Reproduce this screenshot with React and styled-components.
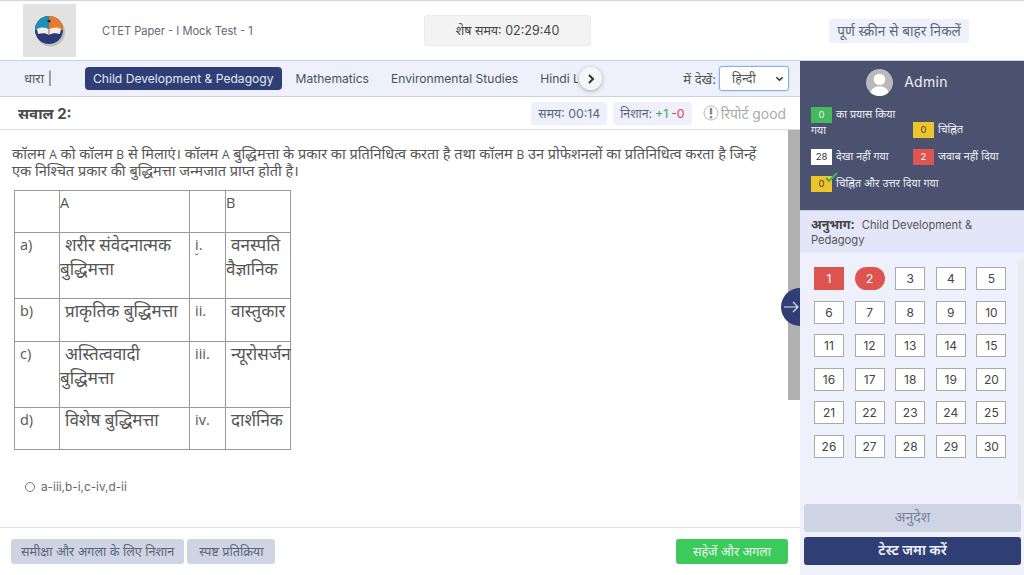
import React from "react";
import styled, { createGlobalStyle } from "styled-components";

const UI_FONT = `"Inter", "Noto Sans", "Open Sans", sans-serif`;
const BODY_FONT = `"Open Sans", "Noto Sans", sans-serif`;

const Global = createGlobalStyle`
  html, body { margin: 0; padding: 0; height: 100%; background: #fff; }
  * { box-sizing: border-box; }
  body { font-family: ${UI_FONT}; color: #444; overflow: hidden; }
`;

const Page = styled.div`
  width: 1024px;
  height: 575px;
  display: flex;
  flex-direction: column;
  overflow: hidden;
`;

const Header = styled.header`
  height: 61px;
  flex: none;
  display: flex;
  align-items: center;
  border-top: 1px solid #ccd5e8;
  border-bottom: 1px solid #c8d1e6;
  padding-left: 23px;
`;

const LogoBox = styled.div`
  width: 53px;
  height: 53px;
  background: #e2e2e2;
  display: flex;
  align-items: center;
  justify-content: center;
  flex: none;
`;

const TestName = styled.div`
  width: 322px;
  margin-left: 26px;
  font-size: 11.1px;
  color: #667;
`;

const Timer = styled.div`
  width: 167px;
  height: 31px;
  background: #f3f3f3;
  border: 1px solid #ebebeb;
  border-radius: 3px;
  display: flex;
  align-items: center;
  justify-content: center;
  font-size: 12.5px;
  color: #444;
`;

const ExitButton = styled.div`
  margin-left: 238px;
  width: 140px;
  height: 24px;
  background: #eef1fb;
  border-radius: 3px;
  display: flex;
  align-items: center;
  justify-content: center;
  font-size: 13.6px;
  color: #5c6478;
`;

const Body = styled.div`
  flex: 1;
  display: flex;
  min-height: 0;
`;

const Main = styled.main`
  width: 800px;
  flex: none;
  display: flex;
  flex-direction: column;
  position: relative;
`;

const TabsBar = styled.div`
  height: 36px;
  flex: none;
  background: #eef1fb;
  border-bottom: 1px solid #c8d1e6;
  display: flex;
  align-items: center;
  position: relative;
`;

const SectionLabel = styled.div`
  width: 85px;
  padding: 0 0 2px 24px;
  font-size: 13px;
  color: #555;
  flex: none;
`;

const Tabs = styled.div`
  width: 493px;
  display: flex;
  align-items: center;
  overflow: hidden;
  flex: none;
`;

const Tab = styled.div`
  flex: none;
  height: 23px;
  padding: 0 8px;
  margin-right: 6px;
  border-radius: 4px;
  display: flex;
  align-items: center;
  font-size: 12.1px;
  white-space: nowrap;
  color: ${(p) => (p.$active ? "#e6e9f5" : "#4a4f5c")};
  background: ${(p) => (p.$active ? "#2f3e75" : "transparent")};
`;

const ScrollButton = styled.div`
  position: absolute;
  left: 579px;
  top: 6px;
  width: 23px;
  height: 23px;
  border-radius: 50%;
  background: #f5f6fa;
  box-shadow: 0 1px 4px rgba(0, 0, 0, 0.3);
  display: flex;
  align-items: center;
  justify-content: center;
`;

const ViewIn = styled.div`
  margin-left: auto;
  display: flex;
  align-items: center;
  gap: 3px;
  padding-right: 11px;
  font-size: 13px;
  color: #555;
`;

const LangSelect = styled.div`
  width: 70px;
  height: 25px;
  background: #fff;
  border: 1px solid #7db4ea;
  border-radius: 3px;
  box-shadow: 0 0 2px #a9cdf2;
  display: flex;
  align-items: center;
  justify-content: space-between;
  padding: 0 4px 0 12px;
  font-size: 12.5px;
  color: #555;
`;

const QuestionBar = styled.div`
  height: 33px;
  flex: none;
  display: flex;
  align-items: center;
  border-bottom: 1px solid #d5dbe9;
  padding: 0 14px 0 18px;
`;

const QuestionNo = styled.div`
  font-size: 15px;
  font-weight: 700;
  color: #4a4a4a;
  margin-right: auto;
`;

const Chip = styled.div`
  height: 23px;
  padding: 0 7px;
  margin-right: 6px;
  background: #eef1fb;
  border-radius: 3px;
  display: flex;
  align-items: center;
  gap: 3px;
  font-size: 12.3px;
  color: #5c6478;
`;

const Mark = styled.span`
  color: ${(p) => p.$color};
`;

const Report = styled.div`
  display: flex;
  align-items: center;
  gap: 2px;
  margin-left: 5px;
  font-size: 13.9px;
  color: #aaa;
`;

const Content = styled.div`
  flex: 1;
  min-height: 0;
  padding: 16px 24px 0 12px;
  position: relative;
`;

const Thumb = styled.div`
  position: absolute;
  right: 0;
  top: 0;
  width: 12px;
  height: 270px;
  background: #b0b0b0;
`;

const QuestionText = styled.p`
  margin: 0;
  font-family: ${BODY_FONT};
  font-size: 14.5px;
  line-height: 16px;
  color: #555;
`;

const Latin = styled.span`
  font-size: 12px;
`;

const MatchTable = styled.table`
  margin: 11px 0 0 2px;
  border-collapse: collapse;
  table-layout: fixed;
  width: 276px;
  font-family: ${BODY_FONT};
  font-size: 14.5px;
  line-height: 24px;
  color: #555;
`;

const Cell = styled.td`
  border: 1px solid #999;
  vertical-align: top;
  padding: 0 0 0 ${(p) => p.$pad ?? 5}px;
  height: ${(p) => p.$h}px;
  width: ${(p) => p.$w}px;
`;

const Hindi = styled.div`
  font-size: 17px;
  white-space: nowrap;
  padding-left: ${(p) => (p.$indent ? 5 : 0)}px;
`;

const Squiggle = styled.span`
  text-decoration: underline wavy #d33 1px;
`;

const Option = styled.label`
  margin: 30px 0 0 13px;
  display: flex;
  align-items: center;
  gap: 6px;
  font-size: 11.8px;
  color: #666;
`;

const Radio = styled.span`
  width: 10px;
  height: 10px;
  border-radius: 50%;
  border: 1px solid #777;
  background: #fff;
`;

const Footer = styled.div`
  height: 48px;
  flex: none;
  border-top: 1px solid #dcdfea;
  display: flex;
  align-items: flex-start;
  padding: 11px 12px 0 11px;
  gap: 3px;
`;

const ActionButton = styled.div`
  height: 25px;
  padding: 0 ${(p) => p.$pad}px;
  border-radius: 3px;
  background: ${(p) => p.$bg};
  color: ${(p) => p.$color};
  display: flex;
  align-items: center;
  font-size: 12.6px;
  ${(p) => p.$right && "margin-left: auto; width: 112px; justify-content: center;"}
`;

const Side = styled.aside`
  flex: 1;
  display: flex;
  flex-direction: column;
  background: #eef1fb;
  min-width: 0;
`;

const Summary = styled.div`
  height: 150px;
  flex: none;
  background: #4a5270;
  border-bottom: 1px solid #c8cee0;
  padding: 8px 0 0 11px;
  color: #eef0f6;
`;

const User = styled.div`
  display: flex;
  align-items: center;
  justify-content: center;
  gap: 11px;
  margin: 0 0 11px -1px;
  padding-right: 20px;
`;

const UserName = styled.span`
  font-size: 14px;
  letter-spacing: 0.3px;
  padding-bottom: 3px;
`;

const Avatar = styled.div`
  width: 27px;
  height: 27px;
  border-radius: 50%;
  background: #b9b9b9;
  overflow: hidden;
`;

const Legend = styled.div`
  display: flex;
  flex-wrap: wrap;
  align-items: flex-end;
`;

const LegendItem = styled.div`
  width: ${(p) => p.$w ?? 102}px;
  padding-right: ${(p) => p.$pr ?? 0}px;
  font-size: 10.7px;
  line-height: 15px;
  margin-bottom: 11px;
  position: relative;
`;

const Badge = styled.span`
  display: inline-block;
  width: 21px;
  height: 16px;
  margin-right: 4px;
  text-align: center;
  font-size: 9.5px;
  line-height: 16px;
  vertical-align: middle;
  background: ${(p) => p.$bg};
  color: ${(p) => p.$color};
`;

const Tick = styled.svg`
  position: absolute;
  left: 14px;
  top: -4px;
`;

const SectionInfo = styled.div`
  height: 42px;
  flex: none;
  background: #e3e6f8;
  padding: 6px 11px 0;
  font-size: 11.2px;
  line-height: 15px;
  color: #555;
`;

const Bold = styled.b`
  font-size: 12.5px;
  color: #444;
  margin-right: 4px;
`;

const PaletteWrap = styled.div`
  flex: 1;
  min-height: 0;
  padding: 14px 0 0 14px;
  position: relative;
`;

const Palette = styled.div`
  display: grid;
  grid-template-columns: repeat(5, 30px);
  grid-auto-rows: 23px;
  column-gap: 10.6px;
  row-gap: 10.6px;
`;

const Cellbtn = styled.div`
  display: flex;
  align-items: center;
  justify-content: center;
  font-size: 12px;
  color: ${(p) => (p.$state ? "#fff" : "#444")};
  background: ${(p) => (p.$state ? "#dd5450" : "#fff")};
  border: ${(p) => (p.$state ? "none" : "1px solid #aaa")};
  border-radius: ${(p) => (p.$state === "round" ? "12px" : "0")};
`;

const SideTrack = styled.div`
  position: absolute;
  right: 0;
  top: 7px;
  width: 6px;
  height: 240px;
  background: #e9ebf2;
`;

const SideButtons = styled.div`
  flex: none;
  padding: 0 3px 10px 4px;
  display: flex;
  flex-direction: column;
  gap: 5px;
`;

const SideButton = styled.div`
  height: 28px;
  padding-bottom: 4px;
  border-radius: 3px;
  background: ${(p) => p.$bg};
  color: ${(p) => p.$color};
  font-size: 14px;
  font-weight: ${(p) => (p.$strong ? 600 : 400)};
  display: flex;
  align-items: center;
  justify-content: center;
`;

const CollapseTab = styled.div`
  position: absolute;
  left: 781px;
  top: 288px;
  width: 19px;
  height: 38px;
  border-radius: 19px 0 0 19px;
  background: #2f3e75;
  display: flex;
  align-items: center;
  justify-content: flex-start;
  padding-left: 2px;
`;

const rows = [
  ["a)", ["शरीर संवेदनात्मक", "बुद्धिमत्ता"], "i.", ["वनस्पति", "वैज्ञानिक"], 66],
  ["b)", ["प्राकृतिक बुद्धिमत्ता"], "ii.", ["वास्तुकार"], 43],
  ["c)", ["अस्तित्ववादी", "बुद्धिमत्ता"], "iii.", ["न्यूरोसर्जन"], 66],
  ["d)", ["विशेष बुद्धिमत्ता"], "iv.", ["दार्शनिक"], 42],
];

function Lines({ lines }) {
  return lines.map((line, i) => (
    <Hindi key={i} $indent={i === 0}>{line}</Hindi>
  ));
}

function Logo() {
  return (
    <svg width="32" height="32" viewBox="0 0 32 32">
      <circle cx="16.5" cy="17" r="14.5" fill="#8a8a8a" opacity="0.4" />
      <circle cx="15" cy="15" r="14" fill="#2a3a78" />
      <path d="M15 1a14 14 0 0 1 14 14H15z" fill="#e87b2c" />
      <path d="M15 1A14 14 0 0 0 1 15h14z" fill="#1f8fb8" />
      <circle cx="15" cy="6" r="1.6" fill="#2a2a3a" />
      <path d="M3 14c4-2 9-2 12 1 3-3 8-3 12-1l-1 5c-4-1-8-1-11 1-3-2-7-2-11-1z" fill="#f4efe4" />
      <path d="M15 15v5" stroke="#c55" strokeWidth="1" />
    </svg>
  );
}

export default function App() {
  const cells = Array.from({ length: 30 }, (_, i) => i + 1);
  return (
    <Page>
      <Global />
      <Header>
        <LogoBox>
          <Logo />
        </LogoBox>
        <TestName>CTET Paper - I Mock Test - 1</TestName>
        <Timer>शेष समय: 02:29:40</Timer>
        <ExitButton>पूर्ण स्क्रीन से बाहर निकलें</ExitButton>
      </Header>
      <Body>
        <Main>
          <TabsBar>
            <SectionLabel>धारा |</SectionLabel>
            <Tabs>
              <Tab $active>Child Development &amp; Pedagogy</Tab>
              <Tab>Mathematics</Tab>
              <Tab>Environmental Studies</Tab>
              <Tab>Hindi Language</Tab>
            </Tabs>
            <ScrollButton>
              <svg width="10" height="10" viewBox="0 0 10 10">
                <path d="M3 1l4 4-4 4" fill="none" stroke="#333" strokeWidth="2" />
              </svg>
            </ScrollButton>
            <ViewIn>
              में देखें:
              <LangSelect>
                हिन्दी
                <svg width="9" height="9" viewBox="0 0 10 10">
                  <path d="M1.5 3.5L5 7l3.5-3.5" fill="none" stroke="#333" strokeWidth="1.6" />
                </svg>
              </LangSelect>
            </ViewIn>
          </TabsBar>
          <QuestionBar>
            <QuestionNo>सवाल 2:</QuestionNo>
            <Chip>समय: 00:14</Chip>
            <Chip>
              निशान: <Mark $color="#3aa655">+1</Mark> <Mark $color="#e0444a">-0</Mark>
            </Chip>
            <Report>
              <svg width="16" height="16" viewBox="0 0 16 16">
                <circle cx="8" cy="8" r="7" fill="none" stroke="#bbb" strokeWidth="1" />
                <path d="M8 3v6.5" stroke="#888" strokeWidth="2.4" />
                <circle cx="8" cy="12.2" r="1.3" fill="#888" />
              </svg>
              रिपोर्ट good
            </Report>
          </QuestionBar>
          <Content>
            <Thumb />
            <QuestionText>
              कॉलम <Latin>A</Latin> को कॉलम <Latin>B</Latin> से मिलाएं। कॉलम <Latin>A</Latin> बुद्धिमत्ता के प्रकार का प्रतिनिधित्व करता है तथा कॉलम <Latin>B</Latin> उन प्रोफेशनलों का प्रतिनिधित्व करता है जिन्हें एक निश्चित प्रकार की बुद्धिमत्ता जन्मजात प्राप्त होती है।
            </QuestionText>
            <MatchTable>
              <tbody>
                <tr>
                  <Cell $w={45} $h={42} />
                  <Cell $w={130} $pad={0}>A</Cell>
                  <Cell $w={36} />
                  <Cell $w={65} $pad={0}>B</Cell>
                </tr>
                {rows.map(([a, left, b, right, h]) => (
                  <tr key={a}>
                    <Cell $h={h}>{a}</Cell>
                    <Cell $pad={0}><Lines lines={left} /></Cell>
                    <Cell>{b === "i." ? <><Squiggle>i</Squiggle>.</> : b}</Cell>
                    <Cell $pad={0}><Lines lines={right} /></Cell>
                  </tr>
                ))}
              </tbody>
            </MatchTable>
            <Option>
              <Radio />
              a-iii,b-i,c-iv,d-ii
            </Option>
          </Content>
          <Footer>
            <ActionButton $pad={10} $bg="#ced4e4" $color="#5c6478">समीक्षा और अगला के लिए निशान</ActionButton>
            <ActionButton $pad={12} $bg="#ced4e4" $color="#5c6478">स्पष्ट प्रतिक्रिया</ActionButton>
            <ActionButton $right $bg="#3ccb5a" $color="#eafbee">सहेजें और अगला</ActionButton>
          </Footer>
        </Main>
        <CollapseTab>
          <svg width="17" height="14" viewBox="0 0 17 14">
            <path d="M1 7h14M10 2l5 5-5 5" fill="none" stroke="#dfe5f5" strokeWidth="1.2" />
          </svg>
        </CollapseTab>
        <Side>
          <Summary>
            <User>
              <Avatar>
                <svg width="27" height="27" viewBox="0 0 26 26">
                  <circle cx="13" cy="10" r="5.5" fill="#fff" />
                  <ellipse cx="13" cy="24" rx="9" ry="7.5" fill="#fff" />
                </svg>
              </Avatar>
              <UserName>Admin</UserName>
            </User>
            <Legend>
              <LegendItem $pr={12}><Badge $bg="#46b85f" $color="#e4f6e8">0</Badge>का प्रयास किया गया</LegendItem>
              <LegendItem><Badge $bg="#eec42d" $color="#444">0</Badge>चिह्नित</LegendItem>
              <LegendItem><Badge $bg="#fff" $color="#333">28</Badge>देखा नहीं गया</LegendItem>
              <LegendItem><Badge $bg="#dd5450" $color="#fff">2</Badge>जवाब नहीं दिया</LegendItem>
              <LegendItem $w={200}>
                <Badge $bg="#eec42d" $color="#444">0</Badge>चिह्नित और उत्तर दिया गया
                <Tick width="13" height="11" viewBox="0 0 13 11">
                  <path d="M1 6l3 3 8-8" fill="none" stroke="#3fb55a" strokeWidth="2" />
                </Tick>
              </LegendItem>
            </Legend>
          </Summary>
          <SectionInfo>
            <Bold>अनुभाग:</Bold> Child Development &amp; Pedagogy
          </SectionInfo>
          <PaletteWrap>
            <SideTrack />
            <Palette>
              {cells.map((n) => (
                <Cellbtn key={n} $state={n === 1 ? "square" : n === 2 ? "round" : undefined}>
                  {n}
                </Cellbtn>
              ))}
            </Palette>
          </PaletteWrap>
          <SideButtons>
            <SideButton $bg="#ced4e4" $color="#7a8298">अनुदेश</SideButton>
            <SideButton $strong $bg="#2f3e75" $color="#eef0f8">टेस्ट जमा करें</SideButton>
          </SideButtons>
        </Side>
      </Body>
    </Page>
  );
}
